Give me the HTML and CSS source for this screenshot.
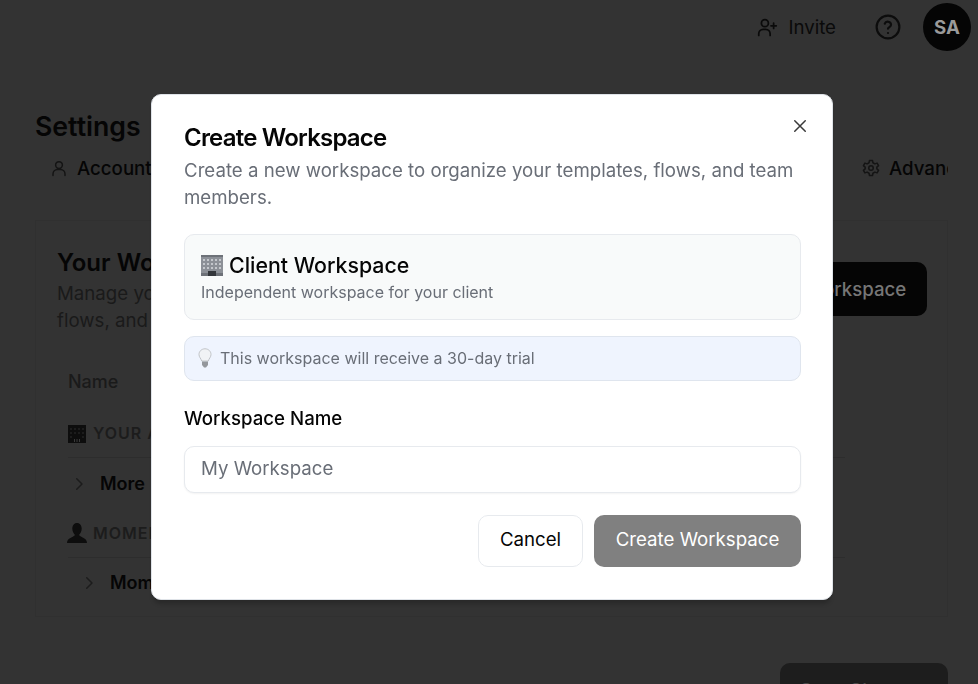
FILE: index.html
```html
<!DOCTYPE html>
<html lang="en">

<head>
    <meta charset="UTF-8" />
    <meta name="viewport" content="width=device-width, initial-scale=1.0" />
    <title>Settings</title>
    <link rel="stylesheet" href="styles.css">
</head>

<body>
    <header class="topbar">
        <a class="invite">
            <svg class="invite-icon" viewBox="0 0 24 24" fill="none" stroke="currentColor" stroke-width="2"
                stroke-linecap="round" stroke-linejoin="round">
                <path d="M15 21v-2a5 5 0 0 0-5-5H7a5 5 0 0 0-5 5v2" />
                <circle cx="9" cy="7" r="4" />
                <path d="M19 7v6M16 10h6" />
            </svg>
            Invite
        </a>
        <svg class="help-icon" viewBox="0 0 24 24" fill="none" stroke="currentColor" stroke-width="2"
            stroke-linecap="round" stroke-linejoin="round">
            <circle cx="12" cy="12" r="10.5" />
            <path d="M9 9a3 3 0 0 1 5.8 1c0 2-2.8 2.600-2.800 3.600" />
            <path d="M12 17.500h.01" />
        </svg>
        <div class="avatar">SA</div>
    </header>

    <main class="settings">
        <h1>Settings</h1>
        <nav class="tabs">
            <a class="tab">
                <svg class="tab-icon" viewBox="0 0 24 24" fill="none" stroke="currentColor" stroke-width="2"
                    stroke-linecap="round">
                    <circle cx="12" cy="8" r="4.500" />
                    <path d="M4 22v-2a6 6 0 0 1 6-6h4a6 6 0 0 1 6 6v2" />
                </svg>
                Account
            </a>
            <a class="tab">
                <svg class="tab-icon gear" viewBox="0 0 24 24" fill="none" stroke="currentColor" stroke-width="2"
                    stroke-linejoin="round">
                    <path d="M10 2h4l.6 3 2.600 1.500 2.900-1 2 3.400-2.300 2v2.200l2.300 2-2 3.400-2.900-1-2.600 1.500-.6 3h-4l-.6-3-2.600-1.500-2.900 1-2-3.400 2.300-2v-2.200l-2.300-2 2-3.400 2.900 1L9.400 5z" />
                    <circle cx="12" cy="12" r="3" />
                </svg>
                Advanced
            </a>
        </nav>

        <section class="card">
            <div class="card-head">
                <div class="card-intro">
                    <h2>Your Workspaces</h2>
                    <p>Manage your workspaces, templates,<br>flows, and team members.</p>
                </div>
                <button class="add-button">Create Workspace</button>
            </div>
            <div class="col-name">Name</div>
            <div class="group-label">
                <svg class="group-icon" viewBox="0 0 18 18">
                    <path fill="#0d0d0d" d="M0 0h18v18H0z" />
                    <path fill="#1c1c1c" d="M2 3h2v2H2zM6 3h2v2H6zM10 3h2v2h-2zM14 3h2v2h-2zM2 7h2v2H2zM6 7h2v2H6zM10 7h2v2h-2zM14 7h2v2h-2zM2 11h2v2H2zM14 11h2v2h-2z" />
                    <path fill="#3a3a3a" d="M6 14h1v3H6zM8.500 14h1v3h-1zM11 14h1v3h-1z" />
                </svg>
                YOUR AGENCY
            </div>
            <div class="row">
                <svg class="chevron" viewBox="0 0 24 24" fill="none" stroke="currentColor" stroke-width="2"
                    stroke-linecap="round" stroke-linejoin="round">
                    <path d="m9 5 7 7-7 7" />
                </svg>
                More
            </div>
            <div class="group-label">
                <svg class="group-icon person" viewBox="0 0 20 20">
                    <path fill="#0d0d0d" d="M10 0c3 0 4.700 2.500 4.700 5.500S13 11 12 12c1.500 2.500 8 2.500 8 8H0c0-5.500 6.500-5.500 8-8-1-1-2.700-3.500-2.700-6.500S7 0 10 0z" />
                </svg>
                MOMENTUM
            </div>
            <div class="row nested">
                <svg class="chevron" viewBox="0 0 24 24" fill="none" stroke="currentColor" stroke-width="2"
                    stroke-linecap="round" stroke-linejoin="round">
                    <path d="m9 5 7 7-7 7" />
                </svg>
                Momentum
            </div>
        </section>

        <div class="save-row">
            <button class="save-button">Save Changes</button>
        </div>
    </main>

    <div class="overlay">
        <div class="modal">
            <button class="close-button" aria-label="Close">
                <svg viewBox="0 0 24 24" fill="none" stroke="currentColor" stroke-width="2" stroke-linecap="round">
                    <path d="M5 5l14 14M19 5 5 19" />
                </svg>
            </button>
            <h3>Create Workspace</h3>
            <p class="modal-desc">Create a new workspace to organize your templates, flows, and team members.</p>

            <div class="type-box">
                <div class="type-title">
                    <svg class="building" viewBox="0 0 22 22">
                        <path fill="#8c9097" d="M0 1h22v21H0z" />
                        <path fill="#6d7178" d="M0 1h22v2H0zM0 19h22v3H0z" />
                        <path fill="#c4c7cc" d="M2 5h2v2H2zM6 5h2v2H6zM10 5h2v2h-2zM14 5h2v2h-2zM18 5h2v2h-2zM2 9h2v2H2zM6 9h2v2H6zM10 9h2v2h-2zM14 9h2v2h-2zM18 9h2v2h-2zM2 13h2v2H2zM6 13h2v2H6zM10 13h2v2h-2zM14 13h2v2h-2zM18 13h2v2h-2z" />
                        <path fill="#33363b" d="M7 17h8v5H7z" />
                    </svg>
                    Client Workspace
                </div>
                <div class="type-sub">Independent workspace for your client</div>
            </div>

            <div class="trial-box">
                <svg class="bulb" viewBox="0 0 14 20">
                    <path fill="#f1f3f5" stroke="#c0c3c7" stroke-width="1" d="M7 .8c3.400 0 6 2.500 6 5.700 0 2.600-2 4-2.700 6.500H3.700C3 10.500 1 9.100 1 6.500 1 3.300 3.600.8 7 .800z" />
                    <path fill="#94979c" d="M4 13.500h6v3.500l-2 2.500H6L4 17z" />
                </svg>
                This workspace will receive a 30-day trial
            </div>

            <label class="field-label" for="workspaceName">Workspace Name</label>
            <input class="field-input" id="workspaceName" type="text" placeholder="My Workspace" />

            <div class="modal-actions">
                <button class="cancel-button">Cancel</button>
                <button class="create-button">Create Workspace</button>
            </div>
        </div>
    </div>
</body>

</html>
```

FILE: styles.css
```css
* {
    box-sizing: border-box;
}

body {
    margin: 0;
    height: 684px;
    overflow: hidden;
    background-color: #333;
    color: #050505;
    font-family: Inter, "Liberation Sans", sans-serif;
}

button {
    font-family: inherit;
}

.topbar {
    display: flex;
    align-items: center;
    justify-content: flex-end;
    height: 54px;
    padding: 0 7px 0 0;
}

.invite {
    display: flex;
    align-items: center;
    gap: 10px;
    margin-right: 39px;
    font-size: 18.67px;
    color: #0a0a0a;
}

.invite-icon {
    width: 21px;
    height: 21px;
}

.help-icon {
    width: 26px;
    height: 26px;
    margin-right: 22px;
    color: #0c0c0c;
}

.avatar {
    display: flex;
    align-items: center;
    justify-content: center;
    width: 48px;
    height: 48px;
    border-radius: 50%;
    background-color: #050505;
    color: #9a9a9a;
    font-size: 18.67px;
    font-weight: 700;
}

.settings {
    padding: 54px 30px 0 35px;
}

.settings h1 {
    margin: 0;
    font-size: 26.67px;
    line-height: 36px;
    font-weight: 600;
}

.tabs {
    display: flex;
    justify-content: space-between;
    height: 30px;
    margin: 9px 0 0 15px;
    overflow: hidden;
}

.tab {
    display: flex;
    align-items: center;
    gap: 9px;
    font-size: 18.67px;
    font-weight: 500;
    white-space: nowrap;
}

.tab:last-child {
    width: 86px;
    overflow: hidden;
}

.tab-icon {
    flex: none;
    width: 18px;
    height: 18px;
    color: #141414;
}

.card {
    height: 397px;
    margin-top: 37px;
    padding: 26px 20px 0 21px;
    border: 1px solid #303030;
}

.card-head {
    display: flex;
    justify-content: space-between;
}

.card-intro h2 {
    margin: 0;
    font-size: 24px;
    line-height: 32px;
    font-weight: 600;
}

.card-intro p {
    margin: 1px 0 0;
    font-size: 18.67px;
    line-height: 27px;
    color: #1a1a1a;
}

.add-button {
    width: 207px;
    height: 54px;
    margin-top: 15px;
    border: none;
    border-radius: 10px;
    background-color: #050505;
    color: #767676;
    font-size: 18.67px;
    font-weight: 500;
}

.col-name {
    margin: 37px 0 0 11px;
    font-size: 18px;
    line-height: 22px;
    font-weight: 500;
    color: #1a1a1a;
}

.group-label {
    display: flex;
    align-items: center;
    gap: 7px;
    margin: 31px 82px 0 11px;
    padding-bottom: 14px;
    border-bottom: 1px solid #2d2d2d;
    font-size: 16px;
    line-height: 19px;
    font-weight: 600;
    letter-spacing: 1px;
    color: #1c1c1c;
}

.row + .group-label {
    margin-top: 28px;
}

.group-icon {
    flex: none;
    width: 18px;
    height: 18px;
}

.group-icon.person {
    width: 20px;
    height: 20px;
    margin-left: -1px;
    margin-right: -1px;
}

.row {
    display: flex;
    align-items: center;
    gap: 12px;
    margin: 15px 0 0 13px;
    font-size: 18px;
    line-height: 22px;
    font-weight: 600;
}

.row.nested {
    margin: 14px 0 0 23px;
}

.chevron {
    width: 18px;
    height: 18px;
    color: #1c1c1c;
}

.save-row {
    display: flex;
    justify-content: flex-end;
    margin-top: 46px;
}

.save-button {
    width: 168px;
    height: 54px;
    border: none;
    border-radius: 10px;
    background-color: #1d1d1d;
    color: #4a4a4a;
    font-size: 18.67px;
    font-weight: 500;
}

/* modal */
.overlay {
    position: fixed;
    inset: 0;
    padding: 94px 0 0 151px;
}

.modal {
    position: relative;
    width: 682px;
    height: 506px;
    padding: 29px 31px 0 32px;
    background-color: #fff;
    border: 1px solid #dfe3e8;
    border-radius: 10px;
    box-shadow: 0 6px 4px -2px rgba(0, 0, 0, 0.2);
}

.close-button {
    position: absolute;
    top: 22px;
    right: 23px;
    width: 18px;
    height: 18px;
    padding: 0;
    border: none;
    background: none;
    color: #3a3a3a;
}

.modal h3 {
    margin: 0;
    font-size: 24px;
    line-height: 28px;
    font-weight: 600;
    letter-spacing: -0.8px;
    color: #050505;
}

.modal-desc {
    margin: 5px 0 0;
    font-size: 18.67px;
    line-height: 27px;
    color: #696e77;
}

.type-box {
    height: 86px;
    margin-top: 23px;
    padding: 16px 16px 0;
    background-color: #f8fafa;
    border: 1px solid #e7eaee;
    border-radius: 10px;
}

.type-title {
    display: flex;
    align-items: center;
    gap: 6px;
    font-size: 21.33px;
    line-height: 28px;
    font-weight: 500;
    color: #050505;
}

.building {
    width: 22px;
    height: 22px;
}

.type-sub {
    margin-top: 1px;
    font-size: 16px;
    line-height: 24px;
    color: #696e77;
}

.trial-box {
    display: flex;
    align-items: center;
    gap: 8px;
    height: 45px;
    margin-top: 16px;
    padding: 0 16px 2px 13px;
    background-color: #eff4fe;
    border: 1px solid #dfe5ee;
    border-radius: 10px;
    font-size: 16px;
    color: #696e77;
}

.bulb {
    width: 14px;
    height: 20px;
}

.field-label {
    display: block;
    margin-top: 26px;
    font-size: 18.67px;
    line-height: 24px;
    font-weight: 500;
    color: #050505;
}

.field-input {
    display: block;
    width: 100%;
    height: 47px;
    margin-top: 15px;
    padding: 0 16px 2px;
    border: 1px solid #e7eaee;
    border-radius: 10px;
    background-color: #fff;
    box-shadow: 0 1px 2px rgba(0, 0, 0, 0.05);
    font-family: inherit;
    font-size: 18.67px;
}

.field-input::placeholder {
    color: #696e77;
}

.modal-actions {
    display: flex;
    justify-content: flex-end;
    gap: 11px;
    margin-top: 22px;
}

.cancel-button,
.create-button {
    height: 52px;
    padding: 0 0 4px;
    border-radius: 10px;
    font-size: 18.67px;
    font-weight: 400;
}

.cancel-button {
    width: 105px;
    background-color: #fff;
    border: 1px solid #e7eaee;
    color: #050505;
}

.create-button {
    width: 207px;
    background-color: #808080;
    border: none;
    color: #fff;
}
```
